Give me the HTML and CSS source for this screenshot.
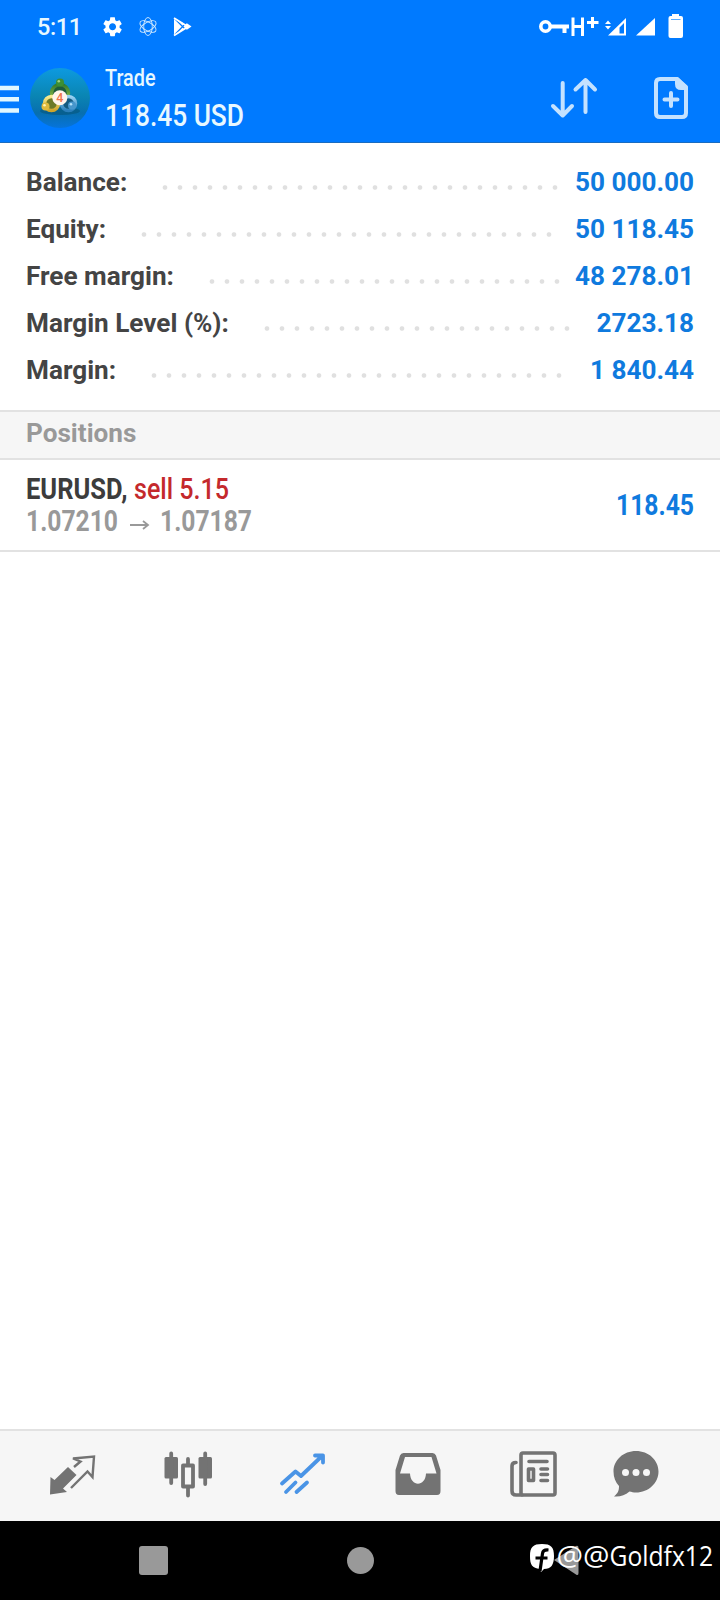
FILE: index.html
```html
<!DOCTYPE html>
<html lang="en">
<head>
<meta charset="utf-8">
<title>Trade</title>
<link rel="stylesheet" href="styles.css">
</head>
<body>
<div class="screen">
  <header class="header">
    <div class="status">
      <span class="time">5:11</span>
      <svg class="status-left" width="94" height="28" viewBox="100 13 94 28" fill="#fff">
        <path transform="translate(100.8 15) scale(.98)" d="M19.14 12.94c.04-.3.06-.61.06-.94 0-.32-.02-.64-.07-.94l2.03-1.58c.18-.14.23-.41.12-.61l-1.92-3.32c-.12-.22-.37-.29-.59-.22l-2.39.96c-.5-.38-1.03-.7-1.62-.94l-.36-2.54c-.04-.24-.24-.41-.48-.41h-3.84c-.24 0-.43.17-.47.41l-.36 2.54c-.59.24-1.13.57-1.62.94l-2.39-.96c-.22-.08-.47 0-.59.22L2.74 8.87c-.12.21-.08.47.12.61l2.03 1.58c-.05.3-.09.63-.09.94s.02.64.07.94l-2.03 1.58c-.18.14-.23.41-.12.61l1.92 3.32c.12.22.37.29.59.22l2.39-.96c.5.38 1.03.7 1.62.94l.36 2.54c.05.24.24.41.48.41h3.84c.24 0 .44-.17.47-.41l.36-2.54c.59-.24 1.13-.56 1.62-.94l2.39.96c.22.08.47 0 .59-.22l1.92-3.32c.12-.22.07-.47-.12-.61l-2.01-1.58zM12 15.6c-1.98 0-3.6-1.62-3.6-3.6s1.62-3.6 3.6-3.6 3.6 1.62 3.6 3.6-1.62 3.6-3.6 3.6z"/>
        <g fill="none" stroke="#d5ecff" stroke-width=".9">
          <ellipse cx="148" cy="26.500" rx="4.300" ry="9"/>
          <ellipse cx="148" cy="26.500" rx="4.300" ry="9" transform="rotate(60 148 26.500)"/>
          <ellipse cx="148" cy="26.500" rx="4.300" ry="9" transform="rotate(-60 148 26.500)"/>
        </g>
        <path d="M174 18 182 22.500 186 26.500 182 30.500 174 35.500Z"/>
        <path d="M186.500 23 191.500 26.500 186.500 30 183.500 26.500Z"/>
        <path d="M174.500 18.500 186.500 30.500M174.500 35 186.500 22.500" stroke="#007aff" stroke-width="1.200"/>
        <path d="M174 18 186 25.500M174 35.500 186 28" stroke="#fff" stroke-width="1.800"/>
      </svg>
      <svg class="status-right" width="150" height="28" viewBox="536 13 150 28" fill="#fff">
        <circle cx="545.500" cy="26.500" r="4.700" fill="none" stroke="#fff" stroke-width="3.600"/>
        <path d="M551 24.500H569V28.500H566.500V33H562.500V28.500H551Z"/>
        <path d="M573 17.500V36M582.500 17.500V36M573 26.500H582.500M592.500 17V28M587 22.500H598.500" fill="none" stroke="#fff" stroke-width="3"/>
        <path d="M605 24 608 20.500 611 24ZM605 26 608 29.500 611 26Z"/>
        <path d="M608 35.500 626 18V35.500ZM619.500 27.500V33.500H624V23Z" fill-rule="evenodd"/>
        <path d="M636 35.500 655 18V35.500Z"/>
        <path d="M672 14H679V16H681Q683 16 683 18V36Q683 38 681 38H670.500Q668.500 38 668.500 36V18Q668.500 16 670.500 16H672Z"/>
        <path d="M671 19.500H680.500" stroke="#5aacff" stroke-width="1"/>
      </svg>
    </div>
    <div class="appbar">
      <svg class="menu" width="20" height="30" viewBox="0 84 20 30"><path d="M0 88H19M0 99.300H19M0 110.500H19" stroke="#e0f7ff" stroke-width="4.600"/></svg>
      <svg class="logo" width="60" height="60" viewBox="0 0 60 60">
        <defs>
          <linearGradient id="bg" x1="0" y1="0" x2="0" y2="1"><stop offset="0" stop-color="#0d9ae0"/><stop offset=".45" stop-color="#0a86b4"/><stop offset=".75" stop-color="#086fae"/><stop offset="1" stop-color="#0674dc"/></linearGradient>
          <linearGradient id="gr" x1="0" y1="0" x2="0" y2="1"><stop offset="0" stop-color="#357a2c"/><stop offset="1" stop-color="#9ccb52"/></linearGradient>
          <linearGradient id="ye" x1="0" y1="0" x2="0" y2="1"><stop offset="0" stop-color="#f7ec90"/><stop offset="1" stop-color="#cfa52a"/></linearGradient>
          <linearGradient id="bl" x1="0" y1="0" x2="0" y2="1"><stop offset="0" stop-color="#9ad2f2"/><stop offset="1" stop-color="#2a7fbc"/></linearGradient>
        </defs>
        <circle cx="30" cy="30" r="30" fill="url(#bg)"/>
        <ellipse cx="30" cy="43" rx="20" ry="4" fill="#064f70" opacity=".5"/>
        <circle cx="30" cy="25" r="8.500" fill="#1c5c3c" stroke="url(#gr)" stroke-width="3.500"/>
        <circle cx="21.500" cy="35.500" r="7" fill="#6d7a28" stroke="url(#ye)" stroke-width="3.500"/>
        <circle cx="38.500" cy="35.500" r="7" fill="#145a80" stroke="url(#bl)" stroke-width="3.500"/>
        <circle cx="30" cy="14.500" r="4" fill="#3c8f34"/>
        <circle cx="28.800" cy="13.300" r="1.300" fill="#9ed184"/>
        <circle cx="15.500" cy="38.500" r="4" fill="#dfba3c"/>
        <circle cx="14.500" cy="37.300" r="1.300" fill="#fff2b0"/>
        <circle cx="42" cy="37.500" r="4" fill="#4796cc"/>
        <circle cx="41" cy="36.300" r="1.300" fill="#b5e2fa"/>
        <circle cx="29.800" cy="29.800" r="7.500" fill="#fff5ec"/>
        <text x="29.800" y="34.200" text-anchor="middle" font-size="12.500" font-weight="500" fill="#f0764c">4</text>
      </svg>
      <div class="titles">
        <svg width="52" height="28" viewBox="105 62 52 28"><text x="105" y="86" font-size="24" font-weight="500" fill="#e8f8ff" textLength="50.500" lengthAdjust="spacingAndGlyphs">Trade</text></svg>
        <svg width="142" height="40" viewBox="105 91 142 40"><text x="105" y="126.300" font-size="31.500" font-weight="500" fill="#e8f8ff" textLength="139" lengthAdjust="spacingAndGlyphs">118.45 USD</text></svg>
      </div>
      <svg class="sort" width="50" height="44" viewBox="549 76 50 44" fill="none" stroke="#c4e2ff" stroke-width="4" stroke-linecap="round" stroke-linejoin="round"><path d="M562.700 83V115M553 106 562.700 115.500 572 106M585.500 112V80M575.500 89.500 585.500 80 595 89.500"/></svg>
      <svg class="new-order" width="36" height="44" viewBox="653 76 36 44" fill="none" stroke="#c4e2ff" stroke-width="4" stroke-linejoin="round" stroke-linecap="round"><path d="M677 79H660Q656 79 656 83V113Q656 117 660 117H682Q686 117 686 113V87Z"/><path d="M677 79V84Q677 88 681 88H686Z" fill="#c4e2ff"/><path d="M671 93V106M664.500 99.500H677.500"/></svg>
    </div>
  </header>

  <section class="summary">
    <div class="row"><span class="label">Balance:</span><i class="dots" style="width:405px"></i><span class="value">50 000.00</span></div>
    <div class="row"><span class="label">Equity:</span><i class="dots" style="width:420px"></i><span class="value">50 118.45</span></div>
    <div class="row"><span class="label">Free margin:</span><i class="dots" style="width:360px"></i><span class="value">48 278.01</span></div>
    <div class="row"><span class="label">Margin Level (%):</span><i class="dots" style="width:315px"></i><span class="value">2723.18</span></div>
    <div class="row"><span class="label">Margin:</span><i class="dots" style="width:420px"></i><span class="value">1 840.44</span></div>
  </section>

  <h2 class="section-title">Positions</h2>
  <div class="position">
    <svg width="240" height="76" viewBox="26 467 240 76">
      <text x="26" y="498.500" font-size="29.500" font-weight="700" fill="#3c3c3c" textLength="101.500" lengthAdjust="spacingAndGlyphs">EURUSD,</text>
      <text x="134" y="498.500" font-size="29.500" font-weight="500" fill="#c4292c" textLength="95" lengthAdjust="spacingAndGlyphs">sell 5.15</text>
      <text x="26" y="530.500" font-size="29.500" font-weight="700" fill="#999" textLength="92" lengthAdjust="spacingAndGlyphs">1.07210</text>
      <path d="M130 525H147M143 521 148 525 143 529" fill="none" stroke="#999" stroke-width="1.800"/>
      <text x="160" y="530.500" font-size="29.500" font-weight="700" fill="#999" textLength="92" lengthAdjust="spacingAndGlyphs">1.07187</text>
    </svg>
    <svg width="80" height="40" viewBox="614 485 80 40"><text x="616" y="514.500" font-size="29" font-weight="700" fill="#0f7ade" textLength="78" lengthAdjust="spacingAndGlyphs">118.45</text></svg>
  </div>

  <main class="blank"></main>

  <nav class="tabs">
    <svg width="50" height="50" viewBox="48 1449 50 50"><path d="M50.500 1477 54.500 1480 68 1467 76.500 1475 63 1488.500 67 1492 50 1494.500Z" fill="#737373"/><path d="M74 1467 80.500 1461.500 73 1458.500 94 1456.500 92.500 1477 87.500 1471.500 71 1488" fill="none" stroke="#737373" stroke-width="2.400"/></svg>
    <svg width="50" height="50" viewBox="162.500 1449 50 50" fill="#737373"><rect x="164" y="1457" width="13.500" height="21.500" rx="1.500"/><rect x="198" y="1457" width="13.500" height="21.500" rx="1.500"/><path d="M170.700 1453.500V1483M204.700 1453.500V1484M187.500 1459V1465M187.500 1487V1495.500" stroke="#737373" stroke-width="3.800" stroke-linecap="round"/><rect x="182.500" y="1465.500" width="10" height="21" fill="#f6f6f6" stroke="#737373" stroke-width="3.800" stroke-linejoin="round"/></svg>
    <svg width="50" height="50" viewBox="277 1449 50 50" fill="none" stroke="#4a94e6" stroke-width="3.800" stroke-linecap="round" stroke-linejoin="round"><path d="M282 1483.500 295.500 1471.500 301 1476 322 1456M315 1455.500H323V1462.500M286 1492 295.500 1482.500M296.500 1492 307 1482.500"/></svg>
    <svg width="50" height="50" viewBox="391.500 1449 50 50"><path d="M403 1453H432Q434.500 1453 435.500 1455.500L440 1470V1491Q440 1495 436.500 1495H398.500Q395 1495 395 1491V1470L399.500 1455.500Q400.500 1453 403 1453ZM404.500 1457 399.500 1473.500H409.500C410 1487 425 1487 425.500 1473.500H436L431 1457Z" fill="#737373" fill-rule="evenodd"/></svg>
    <svg width="50" height="50" viewBox="506 1449 50 50" fill="none" stroke="#737373" stroke-width="3.600" stroke-linejoin="round" overflow="visible"><rect x="521" y="1453" width="34" height="42" rx="2"/><path d="M516 1462.500Q512 1462.500 512 1466V1491Q512 1495 516 1495H522M529 1461.500H547M541 1469H547.500M541 1474.500H547.500M541 1480.500H547.500" stroke-linecap="round"/><rect x="528.500" y="1469" width="5" height="11.500"/></svg>
    <svg class="chat" width="50" height="50" viewBox="610 1449 50 50" fill="#737373"><path d="M636 1451C648.500 1451 658.500 1460 658.500 1471.500S648.500 1492.500 636 1492.500C633.500 1492.500 631.500 1492 629.500 1491.500 625 1495.500 620 1497 614 1496.500 618 1493 619 1491 619 1486 615.500 1482 613.500 1477.500 613.500 1471.500 613.500 1460 623.500 1451 636 1451Z"/><g fill="#f6f6f6"><circle cx="625.500" cy="1472.500" r="3.500"/><circle cx="636" cy="1472.500" r="3.500"/><circle cx="646.500" cy="1472.500" r="3.500"/></g></svg>
  </nav>

  <footer class="navbar">
    <svg width="720" height="79" viewBox="0 1521 720 79">
      <rect x="139" y="1546" width="29" height="29" rx="3" fill="#999"/>
      <circle cx="360.500" cy="1560.500" r="13.500" fill="#999"/>
      <path d="M554 1560 576 1546Q578.500 1545 578.500 1548V1573Q578.500 1576 576 1574.500Z" fill="#999"/>
      <path d="M542 1544C551 1544 554 1547 554 1556S551 1569 544 1569L541 1572 540 1569C532 1568 530 1565 530 1556S533 1544 542 1544Z" fill="#fff"/>
      <path d="M540 1571 542.500 1553.500Q543 1549.500 548.500 1550M535.500 1558H547.500" fill="none" stroke="#000" stroke-width="3.200"/>
      <text class="watermark" y="1565.500" font-size="27.500" fill="#fff"><tspan x="556.500" textLength="53" lengthAdjust="spacingAndGlyphs">@@</tspan><tspan x="609.500" textLength="103.500" lengthAdjust="spacingAndGlyphs">Goldfx12</tspan></text>
    </svg>
  </footer>
</div>
</body>
</html>
```
FILE: styles.css
```css
* { box-sizing: border-box; }
body { margin: 0; background: #fff; font-family: Roboto, "Liberation Sans", sans-serif; }
svg { display: block; flex: none; overflow: visible; }
.screen { width: 720px; height: 1600px; display: flex; flex-direction: column; overflow: hidden; }

.header { height: 143px; flex: none; background: #007aff; border-bottom: 1px solid #1a6cc0; }
.status { height: 54px; display: flex; align-items: center; padding: 0 34px 0 37px; }
.time { width: 63px; font-size: 23.5px; font-weight: 500; line-height: 28px; letter-spacing: -.4px; color: #e8f8ff; }
.status-right { margin-left: auto; }
.appbar { height: 88px; display: flex; align-items: center; padding-right: 31px; }
.menu { margin: 2px 10px 0 0; }
.logo { margin-right: 15px; }
.titles { display: flex; flex-direction: column; gap: 1px; margin-top: -4px; }
.sort { margin-left: auto; margin-right: 54px; }

.summary { height: 267px; flex: none; padding: 16px 26px 0; }
.row { height: 47px; display: flex; align-items: center; font-size: 26.15px; font-weight: 700; line-height: 47px; white-space: nowrap; }
.label { color: #444; }
.dots { height: 5px; margin: 10px 0 0 35px; background: radial-gradient(circle at 3px 2.5px, #e0e0e0 1.8px, transparent 2.8px) 0 0 / 15px 5px repeat-x; }
.value { margin-left: auto; color: #0f7ade; }

.section-title { height: 50px; flex: none; margin: 0; padding: 0 26px; border: solid #e2e2e2; border-width: 2px 0; background: #f6f6f6; color: #999; font-size: 26.15px; font-weight: 700; line-height: 42px; }
.position { height: 92px; flex: none; display: flex; justify-content: space-between; align-items: center; padding: 0 26px; border-bottom: 2px solid #e2e2e2; }
.blank { flex: 1; }

.tabs { height: 92px; flex: none; display: flex; align-items: center; gap: 64.5px; padding: 0 0 5px 48px; background: #f6f6f6; border-top: 2px solid #e2e2e2; }
.chat { margin-left: -10.5px; }
.navbar { height: 79px; flex: none; background: #000; }
.watermark { font-family: "Open Sans", "Noto Sans", sans-serif; font-weight: 400; }
```
